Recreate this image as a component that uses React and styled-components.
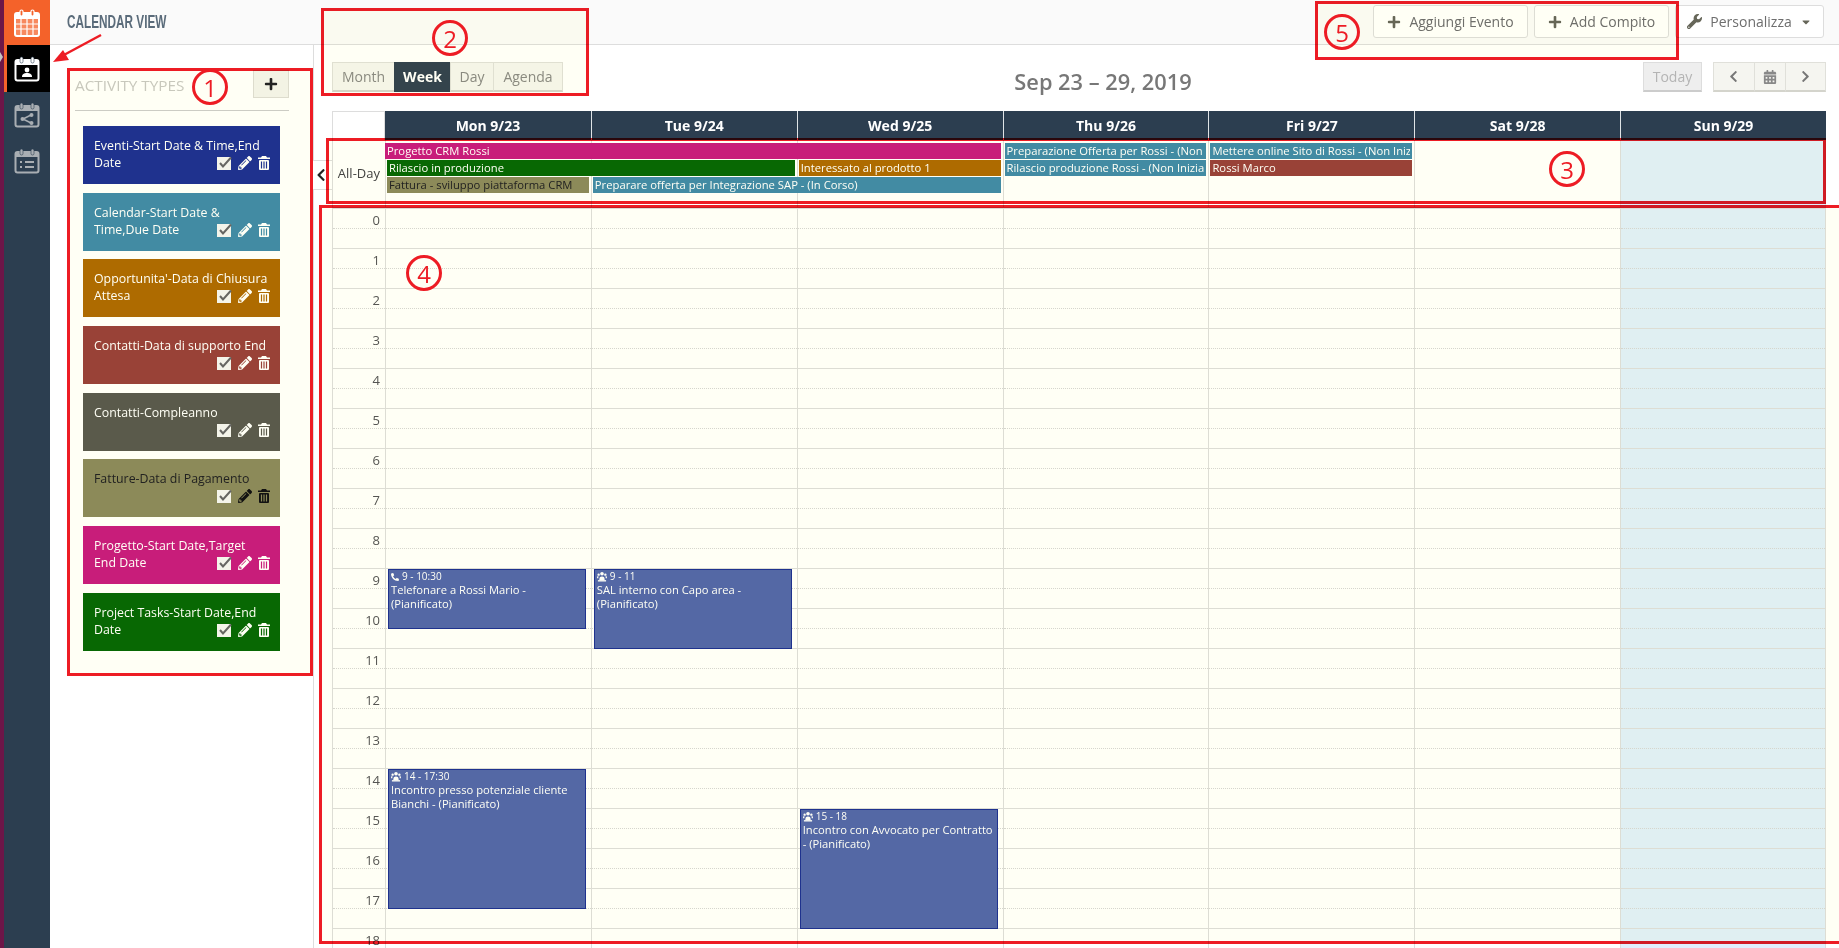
import styled, { createGlobalStyle } from 'styled-components';
import {
  FaPlus,
  FaWrench,
  FaPencilAlt,
  FaChevronLeft,
  FaChevronRight,
  FaCalendarAlt,
  FaPhoneAlt,
  FaCaretDown,
} from 'react-icons/fa';

/* ---------------------------------- data ---------------------------------- */
const ACTIVITY_TYPES = [
  { label: 'Eventi-Start Date & Time,End Date', color: '#1f3294' },
  { label: 'Calendar-Start Date & Time,Due Date', color: '#428baa' },
  { label: "Opportunita'-Data di Chiusura Attesa", color: '#ae6b00' },
  { label: 'Contatti-Data di supporto End', color: '#994239' },
  { label: 'Contatti-Compleanno', color: '#5a5a4e' },
  { label: 'Fatture-Data di Pagamento', color: '#8c8a5c', dark: true },
  { label: 'Progetto-Start Date,Target End Date', color: '#c81d7f' },
  { label: 'Project Tasks-Start Date,End Date', color: '#086803' },
];

const DAYS = ['Mon 9/23', 'Tue 9/24', 'Wed 9/25', 'Thu 9/26', 'Fri 9/27', 'Sat 9/28', 'Sun 9/29'];
const HOURS = Array.from({ length: 19 }, (_, i) => i);

const ALL_DAY = [
  { title: 'Progetto CRM Rossi', from: 0, span: 3, row: 1, color: '#c81d7f', flush: true },
  { title: 'Rilascio in produzione', from: 0, span: 2, row: 2, color: '#086803' },
  { title: 'Interessato al prodotto 1', from: 2, span: 1, row: 2, color: '#ae6b00' },
  { title: 'Fattura - sviluppo piattaforma CRM', from: 0, span: 1, row: 3, color: '#8c8a5c', dark: true },
  { title: 'Preparare offerta per Integrazione SAP - (In Corso)', from: 1, span: 2, row: 3, color: '#428baa' },
  { title: 'Preparazione Offerta per Rossi - (Non Iniziato)', from: 3, span: 1, row: 1, color: '#428baa' },
  { title: 'Rilascio produzione Rossi - (Non Iniziato)', from: 3, span: 1, row: 2, color: '#428baa' },
  { title: 'Mettere online Sito di Rossi - (Non Iniziato)', from: 4, span: 1, row: 1, color: '#428baa' },
  { title: 'Rossi Marco', from: 4, span: 1, row: 2, color: '#994239' },
];

const EVENTS = {
  0: [
    { time: '9 - 10:30', title: 'Telefonare a Rossi Mario - (Pianificato)', start: 9, hours: 1.5, icon: 'phone' },
    { time: '14 - 17:30', title: 'Incontro presso potenziale cliente Bianchi - (Pianificato)', start: 14, hours: 3.5, icon: 'people' },
  ],
  1: [{ time: '9 - 11', title: 'SAL interno con Capo area - (Pianificato)', start: 9, hours: 2, icon: 'people' }],
  2: [{ time: '15 - 18', title: 'Incontro con Avvocato per Contratto - (Pianificato)', start: 15, hours: 3, icon: 'people' }],
};

const MARKERS = [
  { n: 1, x: 210, y: 87 },
  { n: 2, x: 450, y: 38 },
  { n: 3, x: 1567, y: 169 },
  { n: 4, x: 424, y: 273 },
  { n: 5, x: 1342, y: 32 },
];

const ZONES = [
  { x: 67, y: 68, w: 246, h: 608 },
  { x: 321, y: 8, w: 268, h: 88 },
  { x: 326, y: 138, w: 1500, h: 66 },
  { x: 319, y: 205, w: 1530, h: 739 },
  { x: 1315, y: 1, w: 364, h: 59 },
];

const HOUR_PX = 40;

/* ---------------------------------- style --------------------------------- */
const GlobalStyle = createGlobalStyle`
  html, body {
    margin: 0;
    height: 100%;
    overflow: hidden;
    background: #fff;
  }
  * { box-sizing: border-box; }
  body {
    font-family: "Open Sans", "Liberation Sans", sans-serif;
    font-size: 13px;
    color: #444;
  }
`;

const Page = styled.div`
  position: relative;
  display: flex;
  width: 1839px;
  height: 948px;
  overflow: hidden;
`;

const EdgeStrip = styled.div`
  position: relative;
  width: 4px;
  flex: none;
  background: #6d1648;
  &::after {
    content: '';
    position: absolute;
    left: 0;
    top: 52px;
    border-left: 3px solid #c4c4c4;
    border-top: 5px solid transparent;
    border-bottom: 5px solid transparent;
  }
`;

const Sidebar = styled.nav`
  width: 46px;
  flex: none;
  background: #2c3e50;
`;

const SideTile = styled.div`
  height: ${(p) => p.$h}px;
  display: flex;
  align-items: center;
  justify-content: center;
  background: ${(p) => p.$bg || 'transparent'};
  color: ${(p) => p.$fg || '#a9aeb3'};
  border-left: ${(p) => (p.$active ? '3px solid #f4622a' : '0')};
  padding-right: ${(p) => (p.$active ? '3px' : '0')};
`;

const Content = styled.div`
  flex: 1;
  min-width: 0;
  display: flex;
  flex-direction: column;
`;

const TopBar = styled.header`
  height: 45px;
  flex: none;
  display: flex;
  align-items: center;
  justify-content: space-between;
  padding: 0 15px 1px 17px;
  background: #fafafa;
  border-bottom: 1px solid #ddd;
`;

const PageTitle = styled.h1`
  margin: 0;
  font-family: "Liberation Sans", sans-serif;
  font-size: 19px;
  font-weight: 700;
  color: #5a6b7a;
  transform: scaleX(0.62);
  transform-origin: left center;
`;

const TopActions = styled.div`
  display: flex;
  gap: 6px;
`;

const TopButton = styled.button`
  height: 33px;
  width: ${(p) => p.$w}px;
  display: flex;
  align-items: center;
  justify-content: center;
  gap: 8px;
  padding: 0;
  font: 14px "Open Sans", sans-serif;
  color: #6e6e6e;
  background: #fff;
  border: 1px solid #ddd;
  border-radius: 3px;
  svg { color: #666659; }
`;

const Body = styled.div`
  flex: 1;
  min-height: 0;
  display: flex;
`;

const Panel = styled.aside`
  position: relative;
  width: 264px;
  flex: none;
  padding: 25px 24px 0 25px;
  border-right: 1px solid #ddd;
`;

const PanelHead = styled.div`
  display: flex;
  align-items: flex-start;
  justify-content: space-between;
  height: 41px;
  border-bottom: 1px solid #ccc;
`;

const PanelTitle = styled.div`
  font-size: 15.3px;
  line-height: 30px;
  color: #c8c8c4;
`;

const AddType = styled.button`
  width: 36px;
  height: 28px;
  display: flex;
  align-items: center;
  justify-content: center;
  padding: 0;
  background: #f3f3ee;
  border: 1px solid #dddcd6;
  color: #222;
`;

const TypeList = styled.div`
  display: flex;
  flex-direction: column;
  gap: 8.7px;
  width: 197px;
  margin: 15px 0 0 8px;
`;

const TypeCard = styled.div`
  position: relative;
  height: 58px;
  padding: 11px 11px 0;
  font-size: 12.35px;
  line-height: 17px;
  background: ${(p) => p.$bg};
  color: ${(p) => (p.$dark ? '#222' : '#fff')};
`;

const TypeTools = styled.div`
  position: absolute;
  right: 10px;
  bottom: 14px;
  display: flex;
  align-items: center;
  gap: 6px;
`;

const CollapseTab = styled.div`
  position: absolute;
  left: 263px;
  top: 115px;
  width: 19px;
  height: 30px;
  display: flex;
  align-items: center;
  padding-left: 1px;
  color: #222;
  background: #fff;
  border-top: 1px solid #ddd;
  border-bottom: 1px solid #ddd;
`;

const Calendar = styled.main`
  flex: 1;
  min-width: 0;
  padding: 17px 13px 0 18px;
`;

const Toolbar = styled.div`
  display: flex;
  align-items: flex-start;
  justify-content: space-between;
  height: 30px;
  margin-bottom: 19px;
`;

const ButtonGroup = styled.div`
  display: flex;
`;

const ViewButton = styled.button`
  height: 30px;
  width: ${(p) => p.$w}px;
  display: flex;
  align-items: center;
  justify-content: center;
  padding: 0;
  font: ${(p) => (p.$active ? 700 : 400)} 14px "Open Sans", sans-serif;
  color: ${(p) => (p.$active ? '#fff' : '#8a8a84')};
  background: ${(p) => (p.$active ? '#34444f' : '#f5f5f0')};
  border: 1px solid ${(p) => (p.$active ? '#34444f' : '#e0e0da')};
  border-bottom: 2px solid ${(p) => (p.$active ? '#34444f' : '#d4d4cc')};
  & + & { margin-left: -1px; }
`;

const TodayButton = styled(ViewButton)`
  color: #b4b4b4;
  background: #eee;
  border-color: #ddd;
  border-bottom-color: #ccc;
`;

const NavArea = styled.div`
  display: flex;
  gap: 11px;
`;

const RangeTitle = styled.h2`
  margin: 6px 0 0;
  font-size: 21.8px;
  line-height: 27px;
  font-weight: 600;
  color: #777;
`;

const Grid = styled.section`
  width: 1494px;
`;

const dayColumns = 'grid-template-columns: 53px repeat(7, minmax(0, 1fr));';

const HeadRow = styled.div`
  display: grid;
  ${dayColumns}
  height: 29px;
`;

const HeadCorner = styled.div`
  border: 1px solid #ddd;
  border-bottom: 0;
`;

const HeadCell = styled.div`
  display: flex;
  align-items: center;
  justify-content: center;
  font-size: 14px;
  font-weight: 700;
  color: #fff;
  background: #2c3e50;
  border-left: ${(p) => (p.$first ? '0' : '1px solid #dfe3e6')};
`;

const AllDayRow = styled.div`
  display: grid;
  ${dayColumns}
  grid-template-rows: 3px 17px 17px 17px 1fr;
  height: 69px;
  border-bottom: 2px solid #ddd;
`;

const AllDayLabel = styled.div`
  grid-column: 1;
  grid-row: 1 / -1;
  display: flex;
  align-items: center;
  justify-content: flex-end;
  padding: 0 5px 2px 0;
  font-size: 13px;
  border-left: 1px solid #ddd;
`;

const AllDayCell = styled.div`
  grid-row: 1 / -1;
  border-left: 1px solid #ddd;
  background: ${(p) => (p.$today ? '#e0effc' : 'transparent')};
  border-right: ${(p) => (p.$last ? '1px solid #ddd' : '0')};
`;

const AllDayBar = styled.div`
  z-index: 1;
  height: 16px;
  min-width: 0;
  margin: 0 2px 0 ${(p) => (p.$flush ? 0 : 2)}px;
  border: solid ${(p) => p.$bg};
  border-width: 0 2px;
  overflow: hidden;
  white-space: nowrap;
  font-size: 11.25px;
  line-height: 16px;
  background: ${(p) => p.$bg};
  color: ${(p) => (p.$dark ? '#222' : '#fff')};
`;

const TimeGrid = styled.div`
  display: grid;
  ${dayColumns}
`;

const AxisColumn = styled.div`
  border-left: 1px solid #ddd;
`;

const DayColumn = styled.div`
  position: relative;
  border-left: 1px solid #ddd;
  border-right: ${(p) => (p.$last ? '1px solid #ddd' : '0')};
  background: ${(p) => (p.$today ? '#e0effc' : 'transparent')};
`;

const HourCell = styled.div`
  position: relative;
  height: ${HOUR_PX}px;
  padding-right: 5px;
  text-align: right;
  font-size: 13px;
  line-height: 22px;
  color: #555;
  border-bottom: 1px solid #ddd;
  &::after {
    content: '';
    position: absolute;
    left: 0;
    right: 0;
    top: 19px;
    border-top: 1px dotted #d6d6d6;
  }
`;

const EventBox = styled.div`
  position: absolute;
  left: 2px;
  right: 5px;
  z-index: 1;
  padding: 0 2px;
  overflow: hidden;
  font-size: 11.2px;
  line-height: 14px;
  color: #fff;
  background: #5468ac;
  border: 1px solid #1f3294;
`;

const EventTime = styled.div`
  display: flex;
  align-items: center;
  gap: 3px;
  font-size: 10px;
  line-height: 13px;
`;

const Zone = styled.div`
  position: absolute;
  z-index: 5;
  pointer-events: none;
  border: 3px solid #ed1c24;
  background: #fffff5;
  mix-blend-mode: multiply;
`;

const Marker = styled.div`
  position: absolute;
  z-index: 6;
  width: 36px;
  height: 36px;
  margin: -18px 0 0 -18px;
  display: flex;
  align-items: center;
  justify-content: center;
  font-size: 24px;
  color: #ed1c24;
  border: 3px solid #ed1c24;
  border-radius: 50%;
`;

const Arrow = styled.svg`
  position: absolute;
  z-index: 6;
  left: 50px;
  top: 32px;
`;

/* -------------------------------- drawings -------------------------------- */
const CalendarFrame = ({ children, size = 26 }) => (
  <svg width={size} height={size} viewBox="0 0 26 26" fill="none">
    <rect x="1.5" y="4" width="23" height="20.5" rx="2" stroke="currentColor" strokeWidth="2" />
    <rect x="1.5" y="4" width="23" height="5" fill="currentColor" />
    <rect x="6" y="1" width="3" height="6" rx="1.5" fill="currentColor" stroke="#2c3e50" strokeWidth=".6" />
    <rect x="17" y="1" width="3" height="6" rx="1.5" fill="currentColor" stroke="#2c3e50" strokeWidth=".6" />
    {children}
  </svg>
);

const LogoIcon = () => (
  <svg width="26" height="28" viewBox="0 0 26 28" fill="none" stroke="#fff">
    <rect x="1" y="4" width="24" height="23" rx="2" strokeWidth="2" fill="#fff" fillOpacity=".25" />
    <rect x="1" y="4" width="24" height="6" fill="#fff" stroke="none" />
    <rect x="6" y="1" width="3" height="6" rx="1.5" fill="#f4622a" strokeWidth="1.2" />
    <rect x="17" y="1" width="3" height="6" rx="1.5" fill="#f4622a" strokeWidth="1.2" />
    <path d="M1 15h24M1 20h24M7 10v17M13 10v17M19 10v17" strokeWidth="1.2" />
  </svg>
);

const PersonIcon = () => (
  <CalendarFrame>
    <rect x="3" y="10" width="20" height="13" fill="#000" />
    <circle cx="13" cy="14" r="2.4" fill="#fff" />
    <path d="M8 21c0-3 2-4 5-4s5 1 5 4z" fill="#fff" />
  </CalendarFrame>
);

const ShareIcon = () => (
  <CalendarFrame>
    <path d="M9 17l8-4M9 17l8 4" stroke="currentColor" strokeWidth="1.4" />
    <circle cx="8.5" cy="17" r="2" fill="currentColor" />
    <circle cx="17.5" cy="13" r="2" fill="currentColor" />
    <circle cx="17.5" cy="21" r="2" fill="currentColor" />
  </CalendarFrame>
);

const ListIcon = () => (
  <CalendarFrame>
    <path d="M6 14h2M6 19h2M11 14h9M11 19h9" stroke="currentColor" strokeWidth="2" />
  </CalendarFrame>
);

const CheckBox = () => (
  <svg width="15" height="14" viewBox="0 0 15 14">
    <rect x="0" y="1" width="14" height="13" fill="#f4f4f4" />
    <path d="M3 7l3 3.5L14 1.5" fill="none" stroke="#666" strokeWidth="2" />
  </svg>
);

const TrashIcon = ({ color, hole }) => (
  <svg width="12" height="14" viewBox="0 0 12 14">
    <path d="M4 0h4l1 1.5h3V3H0V1.5h3z" fill={color} />
    <rect x="1" y="4" width="10" height="10" rx="1" fill={color} />
    <path d="M3.5 5.5v7M6 5.5v7M8.5 5.5v7" stroke={hole} strokeWidth="1.2" />
  </svg>
);

const PeopleIcon = () => (
  <svg width="10" height="11" viewBox="0 0 11 11" fill="#fff">
    <circle cx="5.5" cy="2.5" r="2" />
    <circle cx="1.8" cy="3.5" r="1.3" />
    <circle cx="9.2" cy="3.5" r="1.3" />
    <path d="M2.5 9.5c0-3 1-4 3-4s3 1 3 4zM0 7.5c0-2 .5-2.5 1.5-2.5v2.5zM11 7.5c0-2-.5-2.5-1.5-2.5v2.5z" />
    <rect x="1" y="9.5" width="9" height="1.5" />
  </svg>
);

/* -------------------------------- component ------------------------------- */
const App = () => {
  return (
    <Page>
      <GlobalStyle />
      <EdgeStrip />
      <Sidebar>
        <SideTile $h={45} $bg="#f4622a"><LogoIcon /></SideTile>
        <SideTile $h={47} $bg="#000" $fg="#fff" $active><PersonIcon /></SideTile>
        <SideTile $h={46}><ShareIcon /></SideTile>
        <SideTile $h={46}><ListIcon /></SideTile>
      </Sidebar>

      <Content>
        <TopBar>
          <PageTitle>CALENDAR VIEW</PageTitle>
          <TopActions>
            <TopButton $w={155}><FaPlus size={14} />Aggiungi Evento</TopButton>
            <TopButton $w={135}><FaPlus size={14} />Add Compito</TopButton>
            <TopButton $w={149}>
              <FaWrench size={15} />Personalizza<FaCaretDown size={12} />
            </TopButton>
          </TopActions>
        </TopBar>

        <Body>
          <Panel>
            <PanelHead>
              <PanelTitle>ACTIVITY TYPES</PanelTitle>
              <AddType><FaPlus size={14} /></AddType>
            </PanelHead>
            <TypeList>
              {ACTIVITY_TYPES.map((t) => (
                <TypeCard key={t.label} $bg={t.color} $dark={t.dark}>
                  {t.label}
                  <TypeTools>
                    <CheckBox />
                    <FaPencilAlt size={14} color={t.dark ? '#111' : '#fff'} />
                    <TrashIcon color={t.dark ? '#111' : '#fff'} hole={t.color} />
                  </TypeTools>
                </TypeCard>
              ))}
            </TypeList>
            <CollapseTab><FaChevronLeft size={14} /></CollapseTab>
          </Panel>

          <Calendar>
            <Toolbar>
              <ButtonGroup>
                <ViewButton $w={63}>Month</ViewButton>
                <ViewButton $w={57} $active>Week</ViewButton>
                <ViewButton $w={44}>Day</ViewButton>
                <ViewButton $w={70}>Agenda</ViewButton>
              </ButtonGroup>
              <RangeTitle>Sep 23 – 29, 2019</RangeTitle>
              <NavArea>
                <TodayButton $w={59}>Today</TodayButton>
                <ButtonGroup>
                  <ViewButton $w={42}><FaChevronLeft size={13} color="#777" /></ViewButton>
                  <ViewButton $w={32}><FaCalendarAlt size={14} color="#888" /></ViewButton>
                  <ViewButton $w={41}><FaChevronRight size={13} color="#777" /></ViewButton>
                </ButtonGroup>
              </NavArea>
            </Toolbar>

            <Grid>
              <HeadRow>
                <HeadCorner />
                {DAYS.map((d, i) => (
                  <HeadCell key={d} $first={i === 0}>{d}</HeadCell>
                ))}
              </HeadRow>

              <AllDayRow>
                <AllDayLabel>All-Day</AllDayLabel>
                {DAYS.map((d, i) => (
                  <AllDayCell key={d} style={{ gridColumn: i + 2 }} $today={i === 6} $last={i === 6} />
                ))}
                {ALL_DAY.map((e) => (
                  <AllDayBar
                    key={e.title}
                    $bg={e.color}
                    $dark={e.dark}
                    $flush={e.flush}
                    style={{ gridColumn: `${e.from + 2} / span ${e.span}`, gridRow: e.row + 1 }}
                  >
                    {e.title}
                  </AllDayBar>
                ))}
              </AllDayRow>

              <TimeGrid>
                <AxisColumn>
                  {HOURS.map((h) => (
                    <HourCell key={h}>{h}</HourCell>
                  ))}
                </AxisColumn>
                {DAYS.map((d, i) => (
                  <DayColumn key={d} $today={i === 6} $last={i === 6}>
                    {HOURS.map((h) => (
                      <HourCell key={h} />
                    ))}
                    {(EVENTS[i] || []).map((e) => (
                      <EventBox
                        key={e.title}
                        style={{ top: e.start * HOUR_PX, height: e.hours * HOUR_PX }}
                      >
                        <EventTime>
                          {e.icon === 'phone' ? <FaPhoneAlt size={8} /> : <PeopleIcon />}
                          {e.time}
                        </EventTime>
                        {e.title}
                      </EventBox>
                    ))}
                  </DayColumn>
                ))}
              </TimeGrid>
            </Grid>
          </Calendar>
        </Body>
      </Content>

      {ZONES.map((z) => (
        <Zone key={z.x} style={{ left: z.x, top: z.y, width: z.w, height: z.h }} />
      ))}
      {MARKERS.map((m) => (
        <Marker key={m.n} style={{ left: m.x, top: m.y }}>{m.n}</Marker>
      ))}
      <Arrow width="54" height="34" viewBox="0 0 54 34">
        <path d="M51 3L12 24" stroke="#ed1c24" strokeWidth="2.5" fill="none" />
        <path d="M3 30L19 28L13 18z" fill="#ed1c24" />
      </Arrow>
    </Page>
  );
};

export default App;
